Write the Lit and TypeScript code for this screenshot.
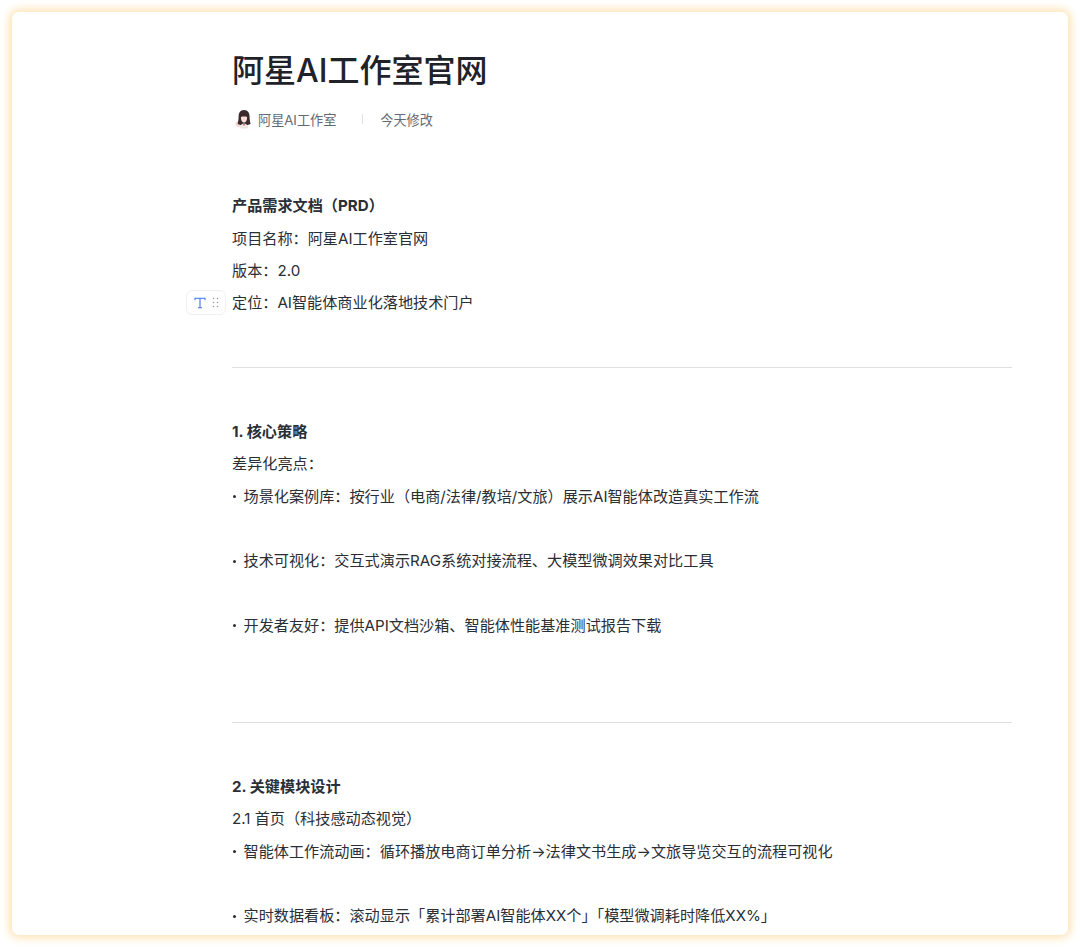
import { LitElement, html, css } from "lit";
import { customElement } from "lit/decorators.js";

type Row = { t: string; b?: boolean; dot?: boolean } | "gap" | "hr";

const ROWS: Row[] = [
  { t: "产品需求文档（PRD）", b: true },
  { t: "项目名称：阿星AI工作室官网" },
  { t: "版本：2.0" },
  { t: "定位：AI智能体商业化落地技术门户" },
  "gap",
  "hr",
  "gap",
  { t: "1. 核心策略", b: true },
  { t: "差异化亮点：" },
  { t: "场景化案例库：按行业（电商/法律/教培/文旅）展示AI智能体改造真实工作流", dot: true },
  "gap",
  { t: "技术可视化：交互式演示RAG系统对接流程、大模型微调效果对比工具", dot: true },
  "gap",
  { t: "开发者友好：提供API文档沙箱、智能体性能基准测试报告下载", dot: true },
  "gap",
  "gap",
  "hr",
  "gap",
  { t: "2. 关键模块设计", b: true },
  { t: "2.1 首页（科技感动态视觉）" },
  { t: "智能体工作流动画：循环播放电商订单分析→法律文书生成→文旅导览交互的流程可视化", dot: true },
  "gap",
  { t: "实时数据看板：滚动显示「累计部署AI智能体XX个」「模型微调耗时降低XX%」", dot: true },
];

@customElement("app-root")
export class AppRoot extends LitElement {
  static styles = css`
    :host {
      display: block;
      height: 947px;
      padding: 12px;
      box-sizing: border-box;
      background: #fff;
      font-family: "Inter", "Noto Sans CJK SC", sans-serif;
      color: #2a2e35;
      overflow: hidden;
    }
    .card {
      position: relative;
      height: 923px;
      border-radius: 7px;
      background: #fff;
      box-shadow: 0 0 9px 3px #fde3b4;
      overflow: hidden;
    }
    .clip {
      height: 100%;
      overflow: hidden;
      padding: 38px 56px 0 220px;
      box-sizing: border-box;
    }
    h1 {
      margin: 0;
      font-size: 32px;
      font-weight: 500;
      line-height: 42px;
      color: #1f2329;
    }
    .meta {
      display: flex;
      align-items: center;
      margin-top: 17px;
      height: 20px;
      font-size: 13.15px;
      color: #646a73;
    }
    .avatar {
      width: 18px;
      height: 20px;
      margin: 0 5px 0 3px;
      flex: none;
    }
    .sep {
      width: 1px;
      height: 10px;
      background: #dee0e3;
      margin: 0 17px 0 26px;
    }
    .body {
      margin-top: 61.3px;
      font-size: 15.15px;
    }
    .row {
      height: 32.27px;
      line-height: 32.27px;
      white-space: nowrap;
    }
    .row.b {
      font-weight: 700;
    }
    .dot {
      display: inline-block;
      width: 3px;
      height: 3px;
      border-radius: 50%;
      background: #2a2e35;
      margin: 0 8px 2px 0.5px;
      vertical-align: middle;
    }
    .rule {
      display: flex;
      align-items: center;
      height: 32.27px;
    }
    .rule i {
      display: block;
      width: 100%;
      height: 1px;
      background: #dee0e3;
    }
    .handle {
      position: absolute;
      left: 174px;
      top: 278px;
      width: 40px;
      height: 25px;
      box-sizing: border-box;
      border: 1px solid #eff0f1;
      border-radius: 6px;
      background: #fff;
      display: flex;
      align-items: center;
      gap: 6px;
      padding-left: 7px;
    }
    .handle svg {
      display: block;
      flex: none;
    }
  `;

  render() {
    return html`
      <div class="card">
        <div class="clip">
          <h1>阿星AI工作室官网</h1>
          <div class="meta">
            <svg class="avatar" viewBox="0 0 18 20">
              <circle cx="3.500" cy="15" r="3" fill="#f6d9d6" />
              <path d="M9 1C5 1 3.600 4 3.600 8c0 3-.6 5-1 7l3 1h7l3-1c-.5-2-1-4-1-7 0-4-1.600-7-5.600-7z" fill="#3a2a2c" />
              <path d="M6 8c1-.6 5-.6 6 0 .3 3-1 5.500-3 5.500S5.700 11 6 8z" fill="#f7dfd6" />
              <path d="M4.500 19c.3-3 2.500-4.500 4.500-4.500s4.200 1.500 4.500 4.500c-2.500 1-6.500 1-9 0z" fill="#efe6e4" />
              <path d="M7.700 15l1.300 2 1.300-2z" fill="#c9606a" />
            </svg>
            <span>阿星AI工作室</span>
            <span class="sep"></span>
            <span>今天修改</span>
          </div>
          <div class="body">
            ${ROWS.map((r) =>
              r === "gap"
                ? html`<div class="row"></div>`
                : r === "hr"
                ? html`<div class="rule"><i></i></div>`
                : html`<div class="row ${r.b ? "b" : ""}">${r.dot ? html`<span class="dot"></span>` : ""}${r.t}</div>`
            )}
          </div>
        </div>
        <div class="handle">
          <svg width="12" height="12" viewBox="0 0 12 12" fill="none" stroke="#3f76ee" stroke-width="1.100">
            <path d="M1 3.200V1.200h10v2M6 1.200v9.600M4 10.800h4" />
          </svg>
          <svg width="7" height="11" viewBox="0 0 7 11" fill="#9a9ea5">
            <circle cx="1.500" cy="1.500" r=".8" />
            <circle cx="5.500" cy="1.500" r=".8" />
            <circle cx="1.500" cy="5.500" r=".8" />
            <circle cx="5.500" cy="5.500" r=".8" />
            <circle cx="1.500" cy="9.500" r=".8" />
            <circle cx="5.500" cy="9.500" r=".8" />
          </svg>
        </div>
      </div>
    `;
  }
}
